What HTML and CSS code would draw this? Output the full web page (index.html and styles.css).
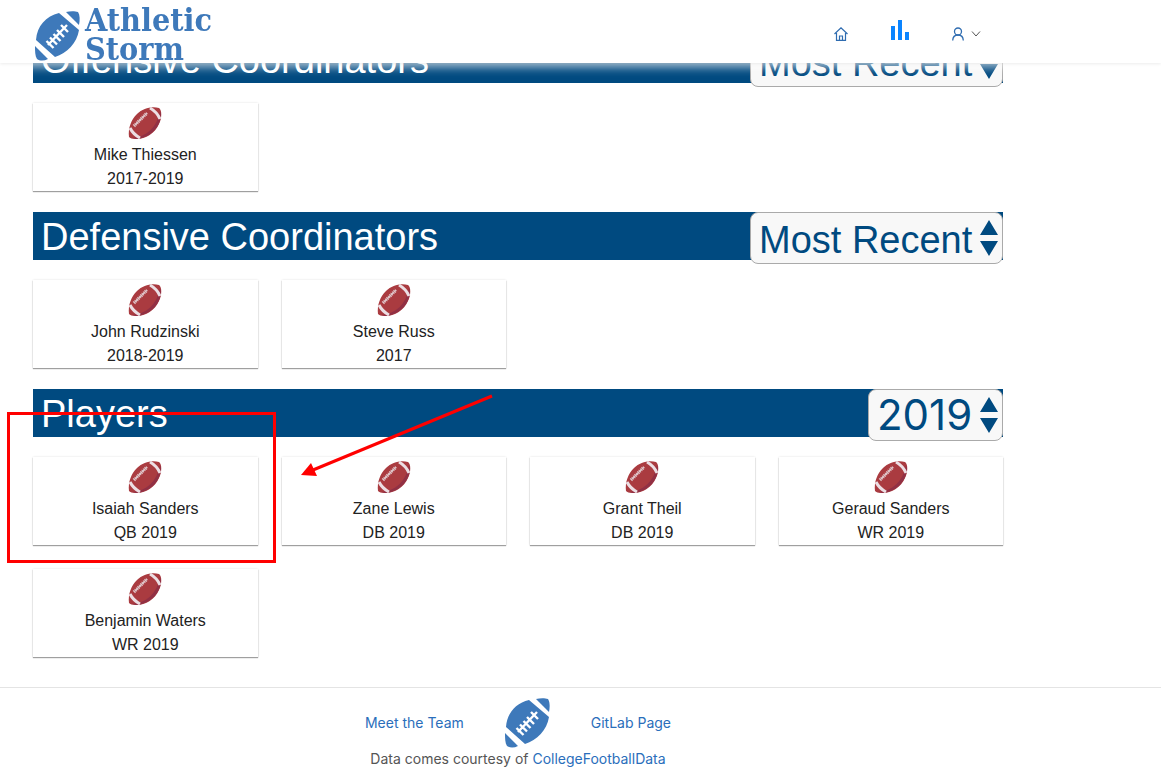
FILE: index.html
```html
<!DOCTYPE html>
<html lang="en">
<head>
<meta charset="utf-8">
<title>Athletic Storm</title>
<link rel="stylesheet" href="styles.css">
</head>
<body>
<svg class="defs" aria-hidden="true">
  <symbol id="ball-blue" viewBox="0 0 45 50">
    <path fill="#3e79ba" d="M24 2C11 5 2 15 1 29L20 46C32 42 42 32 44 19ZM31 1C35 0 40 0 43 1C45 4 45 9 44 14ZM0 35L13 48C9 50 5 50 2 48C0 45 0 40 0 35Z"/>
    <path stroke="#fff" stroke-width="2.400" fill="none" d="M13 34L32 14M11.500 30L18.500 37M15 26.500L22 33.500M18.500 23L25.500 30M22 19L29 26M26 14L33 21"/>
  </symbol>
  <symbol id="ball-red" viewBox="0 0 34 34">
    <path fill="#aa3b40" d="M1 31C0 22 3 14 9 8C15 2 24 0 31 2C34 4 34 12 31 18C27 27 18 33 8 33C4 33 2 32 1 31Z"/>
    <path fill="#913044" d="M33 8C33 20 23 32 8 33L4 32C18 31 29 22 32 5Z"/>
    <path stroke="#ecdfe4" stroke-width="3" fill="none" d="M22 2Q29 6 32 13M2 22Q5 28 12 32"/>
    <path stroke="#dfc5c9" stroke-width="1.500" fill="none" d="M6 20L19 7"/>
    <path stroke="#dfc5c9" stroke-width="3.500" stroke-dasharray="1 1" fill="none" d="M6 20L19 7"/>
  </symbol>
  <symbol id="sort" viewBox="0 0 18 36">
    <path fill="#004a80" d="M9 0L18 15H0ZM0 21H18L9 36Z"/>
  </symbol>
</svg>

<header class="topbar">
  <a class="brand" href="#">
    <svg class="brand-ball" aria-hidden="true"><use href="#ball-blue"/></svg>
    <span class="brand-name">Athletic<br>Storm</span>
  </a>
  <nav class="nav">
    <a href="#" aria-label="Home">
      <svg width="14" height="14" viewBox="0 0 14 14" fill="none" stroke="#2f6cb0" stroke-width="1.200"><path d="M.5 7L7 .8L13.500 7M2.500 6V13.400H11.500V6M5.500 13V9H8.500V13"/></svg>
    </a>
    <a class="nav-stats" href="#" aria-label="Statistics">
      <svg width="18" height="20" viewBox="0 0 18 20" fill="#0a84ff"><path d="M0 6H4V20H0ZM7 0H11V20H7ZM14 12H18V20H14Z"/></svg>
    </a>
    <button class="user" type="button" aria-label="Account">
      <svg width="12" height="14" viewBox="0 0 12 14" fill="none" stroke="#2f6cb0" stroke-width="1.300"><circle cx="6" cy="4.500" r="3.500"/><path d="M.7 13.500C.8 10 3 8 6 8S11.200 10 11.300 13.500"/></svg>
      <svg width="10" height="6" viewBox="0 0 10 6" fill="none" stroke="#555"><path d="M1 .5L5 5L9 .5"/></svg>
    </button>
  </nav>
</header>

<main class="content">
  <section class="group">
    <div class="bar">
      <h2>Offensive Coordinators</h2>
      <div class="picker"><select aria-label="Offensive coordinator order"><option>Most Recent</option></select><svg aria-hidden="true"><use href="#sort"/></svg></div>
    </div>
    <div class="cards">
      <article class="card"><svg aria-hidden="true"><use href="#ball-red"/></svg><p>Mike Thiessen</p><p>2017-2019</p></article>
    </div>
  </section>

  <section class="group">
    <div class="bar">
      <h2>Defensive Coordinators</h2>
      <div class="picker"><select aria-label="Defensive coordinator order"><option>Most Recent</option></select><svg aria-hidden="true"><use href="#sort"/></svg></div>
    </div>
    <div class="cards">
      <article class="card"><svg aria-hidden="true"><use href="#ball-red"/></svg><p>John Rudzinski</p><p>2018-2019</p></article>
      <article class="card"><svg aria-hidden="true"><use href="#ball-red"/></svg><p>Steve Russ</p><p>2017</p></article>
    </div>
  </section>

  <section class="group">
    <div class="bar">
      <h2>Players</h2>
      <div class="picker picker-year"><select aria-label="Season"><option>2019</option></select><svg aria-hidden="true"><use href="#sort"/></svg></div>
    </div>
    <div class="cards">
      <article class="card"><svg aria-hidden="true"><use href="#ball-red"/></svg><p>Isaiah Sanders</p><p>QB 2019</p></article>
      <article class="card"><svg aria-hidden="true"><use href="#ball-red"/></svg><p>Zane Lewis</p><p>DB 2019</p></article>
      <article class="card"><svg aria-hidden="true"><use href="#ball-red"/></svg><p>Grant Theil</p><p>DB 2019</p></article>
      <article class="card"><svg aria-hidden="true"><use href="#ball-red"/></svg><p>Geraud Sanders</p><p>WR 2019</p></article>
      <article class="card"><svg aria-hidden="true"><use href="#ball-red"/></svg><p>Benjamin Waters</p><p>WR 2019</p></article>
    </div>
    <svg class="callout" width="490" height="180" viewBox="0 0 490 180" aria-hidden="true">
      <rect x="3.500" y="24.500" width="266" height="148" fill="none" stroke="red" stroke-width="3"/>
      <path d="M487 7L308 81" stroke="red" stroke-width="3"/>
      <path d="M296 86L306 74L312 87Z" fill="red"/>
    </svg>
  </section>
</main>

<footer class="footer">
  <div class="footer-inner">
    <div class="footer-links">
      <a href="#">Meet the Team</a>
      <svg class="footer-ball" aria-hidden="true"><use href="#ball-blue"/></svg>
      <a href="#">GitLab Page</a>
    </div>
    <p>Data comes courtesy of <a href="#">CollegeFootballData</a></p>
  </div>
</footer>
</body>
</html>
```
FILE: styles.css
```css
* { box-sizing: border-box; }
body { margin: 0; background: #fff; color: #222; font: 16px/24px "Liberation Sans", Arial, sans-serif; }
h2, p { margin: 0; }
a { color: #2a6ebb; text-decoration: none; }
.defs { position: absolute; width: 0; height: 0; }

.topbar {
  position: fixed; z-index: 2; top: 0; left: 0; right: 0;
  display: flex; justify-content: space-between;
  height: 63px; padding: 0 180px 0 35px;
  background: #fff;
  box-shadow: 0 1px 3px rgba(0, 0, 0, .08), 0 2px 10px 1px rgba(255, 255, 255, .8);
}
.brand { display: flex; align-items: center; gap: 5px; }
.brand-ball { width: 45px; height: 50px; margin-top: 8px; }
.brand-name { color: #3e79ba; font: bold 32px/29px "DejaVu Serif Condensed", "DejaVu Serif", serif; padding-top: 7px; }
.nav { display: flex; align-items: center; gap: 43px; padding-top: 5px; }
.nav a, .user { display: flex; align-items: center; }
.nav .nav-stats { padding-bottom: 8px; }
.user { gap: 7px; padding: 0; border: 0; background: none; }

.content { max-width: 1036px; padding: 35px 33px 0; }
.group { position: relative; margin-bottom: 21px; }
.bar { display: flex; justify-content: space-between; align-items: flex-start; height: 48px; padding-left: 8px; background: #004a80; }
.bar h2 { color: #fff; font: 400 38px/50px "Liberation Sans", Arial, sans-serif; }
.picker { position: relative; }
.picker select {
  appearance: none; display: block; height: 52px; padding: 2px 29px 0 8px;
  border: 1px solid #aaa; border-radius: 8px; background: #f8f8f8;
  color: #004a80; font: 400 38px/50px "Liberation Sans", Arial, sans-serif;
}
.picker-year select { padding-top: 0; font: 400 42px/50px Inter, sans-serif; }
.picker svg { position: absolute; top: 8px; right: 5px; width: 18px; height: 36px; pointer-events: none; }
.cards { display: grid; grid-template-columns: repeat(4, 1fr); gap: 24px; padding-top: 20px; }
.card { display: flex; flex-direction: column; align-items: center; padding-top: 3px; background: #fff; box-shadow: 0 1px 1px rgba(0, 0, 0, .35), 0 0 2px rgba(0, 0, 0, .12); }
.card svg { width: 34px; height: 34px; margin-bottom: 3px; }
.callout { position: absolute; top: 0; left: -28px; pointer-events: none; }

.footer { margin-top: 30px; border-top: 1px solid #e4e4e4; color: #555; font: 14px/20px Inter, sans-serif; }
.footer-inner { max-width: 1036px; text-align: center; }
.footer-links { display: flex; justify-content: center; align-items: center; gap: 41px; padding-top: 10px; }
.footer-ball { width: 45px; height: 50px; }
.footer p { padding: 1px 0 4px; }
```
